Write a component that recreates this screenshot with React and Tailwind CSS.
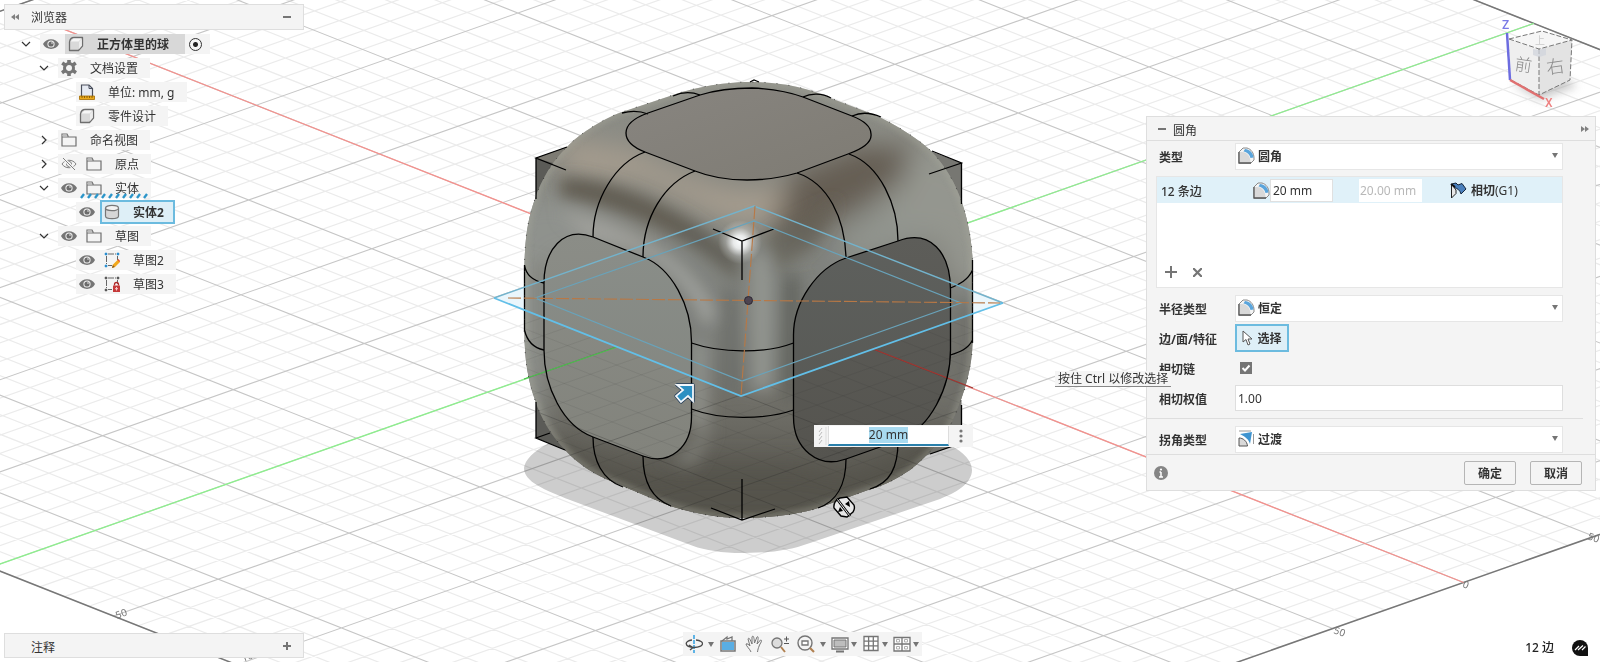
import React from "react";

/* ---------- viewport geometry ---------- */

const ORIGIN = [749, 300];
const AXIS_G = [130.8, -46.1];
const AXIS_R = [123.2, 48.7];
const NEAR = 5.8;
const FAR = 6;

const at = (s, t) => [
  ORIGIN[0] + s * AXIS_G[0] + t * AXIS_R[0],
  ORIGIN[1] + s * AXIS_G[1] + t * AXIS_R[1],
];

const seg = (p, q) => `M${p[0].toFixed(1)},${p[1].toFixed(1)}L${q[0].toFixed(1)},${q[1].toFixed(1)}`;

function buildGrid() {
  let minor = "";
  let major = "";
  for (let i = -30; i <= 30; i++) {
    const v = i / 5;
    const isMajor = i % 5 === 0;
    let d = "";
    if (v >= -NEAR) d += seg(at(v, -FAR), at(v, NEAR));
    if (v <= NEAR) d += seg(at(-NEAR, v), at(FAR, v));
    if (isMajor) major += d;
    else minor += d;
  }
  const corners = [at(-NEAR, -FAR), at(FAR, -FAR), at(FAR, NEAR), at(-NEAR, NEAR)];
  const border = corners.map((c, i) => seg(c, corners[(i + 1) % 4])).join("");
  return { minor, major, border };
}

const GRID = buildGrid();

const BODY =
  "M524.5,332 L524.5,265 C525,235 529,215 535,199 C541,180 553,160 567,147 C577,136 600,120 622,112 L673,95 C690,89 720,82 750,82 C780,82 808,88 825,96 L867,112 C885,118 915,136 930,150 C945,165 956,184 962,203 C968,220 972.5,245 972.5,262 L972.5,343 C972,366 966,390 953,420 C945,436 930,454 910,470 C895,480 880,487 868,490 L818,508 C800,514 770,518 742,518 C715,518 690,512 670,506 L613,482 C596,475 580,466 565,450 C550,434 541,418 535,400 C528,380 524.5,360 524.5,332 Z";
const TOP_FACE =
  "M645,152 C632,147 626,140 626,133 C626,125 634,118 648,113 L700,95 C716,90 733,88 752,88 C772,89 789,92 803,97 L852,116 C865,121 871,127 871,134 C872,142 862,149 848,154 L797,173 C780,178 765,180 747,180 C728,180 710,177 695,171 Z";
const LEFT_FACE =
  "M593,237 C563,226 544,250 544,283 L544,350 C544,387 563,426 593,437 L643,456 C670,466 691.5,447 691.5,417 L691.5,342 C691.5,306 672,268 643,257 Z";
const RIGHT_FACE =
  "M898,241 C930,229 950.5,252 950.5,290 L950.5,350 C950.5,388 930,428 900,440 L846,459 C818,469 793.5,449 793.5,417 L793.5,335 C793.5,302 817,268 846,258 Z";
const EDGES =
  "M645,152 C615,163 593,200 593,237 M695,171 C664,183 643,218 643,257 M797,173 C828,183 845,218 846,258 M849,154 C880,165 898,205 898,241 " +
  "M648,114 C640,111 630,111 622,113 M700,95 C692,92 682,92 673,96 M803,97 C811,93 822,93 831,98 M852,116 C861,112 872,113 881,117 " +
  "M524.5,265 C526,275 534,281 544,283 M524.5,330 C527,341 534,348 544,350 M972.5,270 C968,280 960,284 950.5,288 M972.5,340 C968,349 960,352 950.5,355 M972.5,260 V343 M524.5,265 V332 " +
  "M691.5,343 C720,353 765,354 793.5,343 M691.5,409 C720,420 765,420 793.5,410 " +
  "M593,437 C593,460 602,480 623,487 M643,456 C643,485 655,500 671,506 M846,459 C846,485 836,502 818,508 M898,441 C898,468 890,483 870,489";
const CUBE_EDGES =
  "M713,229 L742,241 L774,229 M742,241 V280 M711,508 L742,520 L775,509 M742,520 V479 " +
  "M566,170 L536,158 L567,147 M536,158 V199 M929,174 L961.5,163 L932,151 M961.5,163 V204 " +
  "M550,433 L536,438 L565,450 M536,438 V402 M930,454 L961.5,443 V405 M750,82 L754,80 L759,82";

function Grid() {
  return (
    <>
      <path d={GRID.minor} stroke="#ebebeb" strokeWidth="1.2" />
      <path d={GRID.major} stroke="#c6c6c6" strokeWidth="1.1" />
    </>
  );
}

function Scene() {
  const [g0, r0, r1, g1] = [at(-NEAR, 0), at(0, -FAR), at(0, NEAR), at(FAR, 0)];
  return (
    <svg
      className="absolute inset-0 h-full w-full"
      viewBox="0 0 1600 662"
      preserveAspectRatio="xMidYMid slice"
      fill="none"
      aria-hidden="true"
    >
      <defs>
        <clipPath id="body"><path d={BODY} /></clipPath>
        <clipPath id="below"><path d="M0,298 H494 L741,396 L1003,303 H1600 V662 H0 Z" /></clipPath>
        <filter id="rim" x="-20%" y="-20%" width="140%" height="140%"><feGaussianBlur stdDeviation="3" /></filter>
        <filter id="b8" x="-60%" y="-60%" width="220%" height="220%"><feGaussianBlur stdDeviation="8" /></filter>
        <filter id="b14" x="-50%" y="-50%" width="200%" height="200%"><feGaussianBlur stdDeviation="14" /></filter>
        <radialGradient id="spark"><stop offset="0" stopColor="#fff" /><stop offset="0.3" stopColor="#fff" stopOpacity="0.85" /><stop offset="0.65" stopColor="#fff" stopOpacity="0.25" /><stop offset="1" stopColor="#fff" stopOpacity="0" /></radialGradient>
        <linearGradient id="topFace" x1="0" y1="0" x2="1" y2="1"><stop stopColor="#888580" /><stop offset="1" stopColor="#7e7b73" /></linearGradient>
        <linearGradient id="leftFace" x1="0" y1="0" x2="0" y2="1"><stop stopColor="#8b8d87" /><stop offset="1" stopColor="#82837c" /></linearGradient>
        <linearGradient id="rightFace" x1="0" y1="0" x2="0" y2="1"><stop stopColor="#5d5d59" /><stop offset="1" stopColor="#55544f" /></linearGradient>
        <linearGradient id="bodyBase" x1="0" y1="82" x2="0" y2="518" gradientUnits="userSpaceOnUse">
          <stop stopColor="#8d8e87" /><stop offset="0.55" stopColor="#7d7d77" /><stop offset="0.78" stopColor="#6b6a63" /><stop offset="1" stopColor="#4f4d46" />
        </linearGradient>
      </defs>

      <path d="M524,468 C526,452 560,432 600,430 L900,430 C940,436 972,452 972,470 C972,484 955,493 940,499 L810,543 C785,552 765,553 735,553 C715,552 700,549 688,544 L570,500 C545,490 524,482 524,468 Z" fill="#cdcdcd" />
      <g style={{ mixBlendMode: "multiply" }}><Grid /></g>
      <path d={GRID.border} stroke="#777" strokeWidth="1.5" />
      <path d={seg(r0, r1)} stroke="#f4918d" strokeWidth="1.3" />
      <path d={seg(g0, g1)} stroke="#8eee8e" strokeWidth="1.3" />

      <g fill="#777" fontSize="10" fontFamily="Noto Sans, sans-serif">
        <text transform="translate(117 619) rotate(-20)">50</text>
        <text transform="translate(243 662) rotate(-20)">100</text>
        <text transform="translate(1333 633) rotate(20)">50</text>
        <text transform="translate(1462 587) rotate(20)">0</text>
        <text transform="translate(1587 539) rotate(20)">50</text>
      </g>

      {/* cube corners that stick out of the rounded body */}
      <path d="M536,158 L570,146 L570,170 L536,202 Z M536,400 V438 L570,452 L570,400 Z" fill="#5b5b57" />
      <path d="M536,158 L570,146 L570,168 Z" fill="#7d7b73" />
      <path d="M961.5,163 L925,149 V200 H961.5 Z" fill="#777772" />
      <path d="M961.5,400 V443 L925,456 V400 Z" fill="#73736e" />

      {/* body */}
      <path d={BODY} fill="url(#bodyBase)" />
      <g clipPath="url(#body)">
        <g filter="url(#b14)">
          <path d="M505,200 L560,190 L640,235 L600,260 L555,260 L540,430 H505 Z" fill="#8f928d" />
          <path d="M885,120 L1000,180 V300 H960 L940,240 L870,245 L880,200 Z" fill="#94968f" />
          <path d="M560,140 L630,150 L690,178 L742,192 L790,185 L780,225 L730,222 L640,180 L565,172 Z" fill="#a99f90" />
          <path d="M790,176 L855,148 L915,140 L900,185 L850,210 L795,250 L768,240 Z" fill="#655d52" />
          <path d="M835,235 L900,205 L940,235 L850,262 Z" fill="#92958f" />
          <path d="M535,435 L640,475 L690,465 H800 L850,475 L970,410 V530 H590 Z" fill="#55534c" />
          <path d="M955,290 H985 V440 H950 Z" fill="#6d6d67" />
        </g>
        <g filter="url(#b8)">
          <path d="M560,178 C610,176 690,212 736,256 L740,282 C690,236 630,208 560,196 Z" fill="#5f5a50" />
          <path d="M560,212 C630,226 690,256 716,312 L706,330 C690,280 655,250 590,238 Z" fill="#a2a29d" />
          <path d="M768,235 L838,200 L812,245 L772,275 Z" fill="#655f55" opacity="0.7" />
          <path d="M532,262 H540 V345 H532 Z" fill="#6f706a" opacity="0.7" />
          <path d="M520,262 H526 V345 H520 Z" fill="#a5a69e" />
          <path d="M690,340 L708,340 L708,425 L690,425 Z" fill="#90918b" />
          <path d="M722,290 H736 V390 H722 Z" fill="#6c6c66" />
          <path d="M752,255 H772 V390 H752 Z" fill="#94958f" />
          <path d="M782,275 H800 V400 H782 Z" fill="#62625c" />
          <path d="M650,463 C670,470 690,455 700,425 L712,430 L695,465 Z" fill="#7d7d76" />
        </g>
        <path d={BODY} stroke="#aaab9f" strokeWidth="5" opacity="0.55" filter="url(#rim)" />
        <circle cx="740" cy="242" r="22" fill="url(#spark)" />
      </g>
      <path d={TOP_FACE} fill="url(#topFace)" />
      <path d={LEFT_FACE} fill="url(#leftFace)" />
      <path d={RIGHT_FACE} fill="url(#rightFace)" />

      {/* ground grid seen through the lower half */}
      <g clipPath="url(#body)">
        <g clipPath="url(#below)">
          <path d={GRID.major} stroke="#222" strokeWidth="1" opacity="0.25" />
          <path d={GRID.minor} stroke="#222" strokeWidth="1" opacity="0.07" />
        </g>
      </g>
      <path d="M524,379 L617,347" stroke="#4bc04b" strokeWidth="1.3" />
      <path d="M873,349 L973,388" stroke="#a5342f" strokeWidth="1.3" />

      <path d="M494,298 L754,206 L1003,303 L741,396 Z" fill="#7cc8ec" opacity="0.03" />
      <path d="M494,298 L524,287 V310 Z M1003,303 L973,291 V314 Z" fill="#eaf6fc" />

      <g stroke="#000" strokeWidth="1.3">
        <path d={TOP_FACE} />
        <path d={LEFT_FACE} />
        <path d={RIGHT_FACE} />
        <path d={EDGES} />
        <path d={CUBE_EDGES} />
      </g>
      <path d={BODY} stroke="#222" strokeWidth="1" strokeDasharray="1 11" opacity="0.7" />

      <path d="M494,298 L754,206 L1003,303" stroke="#73b3cc" strokeWidth="1.4" />
      <path d="M494,298 L741,396 L1003,303" stroke="#62bfe8" strokeWidth="1.8" />
      <path d="M535,298 L754,221 L961,303 L742,381 Z" stroke="#69a3ba" strokeWidth="1.2" />
      <g stroke="#b87845" strokeWidth="1.1" strokeDasharray="13 3">
        <path d="M508,298 L1000,303" />
        <path d="M755,206 L741,396" />
      </g>
      <circle cx="748.500" cy="300.500" r="4" fill="#4d4450" stroke="#2e2833" strokeWidth="1" />

      {/* manipulator arrow */}
      <path d="M677,385 L693,385 L693,401 L688,396 L681,402 L676,396 L683,390 Z" fill="#2b8fc2" stroke="#1f3b57" strokeWidth="3.4" strokeLinejoin="round" />
      <path d="M677,385 L693,385 L693,401 L688,396 L681,402 L676,396 L683,390 Z" fill="#2b8fc2" stroke="#f2f6fa" strokeWidth="1.8" />

      {/* rotate handle */}
      <g transform="translate(844 507)">
        <path d="M-4,-9 L3,-10 L10,-2 A8,8 0 0 1 9,5 L3,10 L-3,9 L-10,1 A9,9 0 0 1 -4,-9 Z" fill="#e8e8e8" stroke="#000" strokeWidth="1.4" />
        <path d="M-7,-8 L6,9" stroke="#000" strokeWidth="2.6" />
        <path d="M-6.500,-7.500 L5.500,8.500" stroke="#e8e8e8" strokeWidth="1" />
        <path d="M1,-3 L5,-6 L6,0 Z M-1,4 L-6,5 L-4,0 Z" fill="#000" />
      </g>
    </svg>
  );
}

/* ---------- icons ---------- */

const Svg = ({ w = 16, h = 16, children }) => (
  <svg width={w} height={h} viewBox={`0 0 ${w} ${h}`} fill="none" aria-hidden="true" className="shrink-0">
    {children}
  </svg>
);
const Chevron = ({ open }) => (
  <Svg w={10} h={10}><path d={open ? "M1,3 L5,7 L9,3" : "M3,1 L7,5 L3,9"} stroke="#333" strokeWidth="1.2" /></Svg>
);
const Eye = () => (
  <Svg w={16} h={12}>
    <path d="M0,6 C3,-0.500 13,-0.500 16,6 C13,12.500 3,12.500 0,6 Z" fill="#757575" />
    <circle cx="8" cy="6" r="3.600" fill="#f4f4f4" /><circle cx="8" cy="6" r="2.600" fill="#6b6b6b" /><circle cx="9" cy="5" r="0.800" fill="#eee" />
  </Svg>
);
const EyeOff = () => (
  <Svg w={16} h={14}>
    <path d="M1,7 C4,2 12,2 15,7 C12,12 4,12 1,7 Z" stroke="#808080" /><circle cx="8" cy="7" r="2.500" stroke="#808080" />
    <path d="M2,1 L14,13" stroke="#f4f4f4" strokeWidth="3" /><path d="M2,1 L14,13" stroke="#808080" />
  </Svg>
);
const Folder = () => (
  <Svg w={16} h={14}><path d="M1,4 H15 V13 H1 Z M1,4 V1 H6 L7,3 V4" stroke="#6e6e6e" strokeWidth="1.2" /><path d="M1.500,1.500 H5.500 L6.500,3.500 H1.500Z" fill="#bdbdbd" /></Svg>
);
const Part = () => (
  <Svg w={16} h={16}>
    <path d="M1.500,6 C2,3 3,1.500 6,1.500 H14.500 V10 L10.500,14.500 H1.500 Z" fill="#d9d9d9" stroke="#6e6e6e" strokeWidth="1.3" strokeLinejoin="round" />
    <path d="M2.500,5.500 L5.500,2.500 H13.500 L10.500,5.500 Z" fill="#f6f6f6" />
    <path d="M11,6 L13.800,3 V9.800 L11,13 Z" fill="#ececec" />
  </Svg>
);
const Gear = () => (
  <Svg>
    <path d="M6.200,0 h3.600 v3 h-3.600z M6.200,13 h3.600 v3 h-3.600z M0.200,4.500 l2,-3 3,2 -2,3z M11,12 l2,-3 3,2.200 -2,3z M15.800,4.500 l-2,-3 -3,2 2,3z M5,12 l-2,-3 -3,2.200 2,3z" fill="#757575" />
    <circle cx="8" cy="8" r="4.500" stroke="#757575" strokeWidth="3" />
  </Svg>
);
const Units = () => (
  <Svg><path d="M2.500,12 V1 H10 L13.500,4.500 V12" fill="#e6eaf2" stroke="#4a4f5c" strokeWidth="1.200" /><path d="M10,1 V4.500 H13.500" stroke="#4a4f5c" /><path d="M0.500,12 H15.500 V15.500 H0.500 Z" fill="#e9a91c" stroke="#a56c00" strokeWidth="0.800" /><path d="M3,12v2M5.500,12v2M8,12v2M10.500,12v2M13,12v2" stroke="#7a5000" strokeWidth="0.800" /></Svg>
);
const Cylinder = () => (
  <Svg><path d="M1.500,4 V12 C1.500,15.500 14.500,15.500 14.500,12 V4" fill="#d6d6d6" stroke="#777" strokeWidth="1.200" /><ellipse cx="8" cy="4" rx="6.500" ry="2.700" fill="#f2f2f2" stroke="#777" strokeWidth="1.200" /></Svg>
);
const Sketch = ({ kind }) => (
  <Svg>
    <path d="M2.500,4 V12 M4,2 H12 M13.500,4 V8 M4,13.500 H8" stroke="#666" strokeDasharray="6 1" />
    <path d="M1,1h2v2h-2z M13,1h2v2h-2z M1,13h2v2h-2z" fill={kind === "lock" ? "#5a5a5a" : "#2b8fd0"} stroke={kind === "lock" ? "#5a5a5a" : "#2b8fd0"} strokeWidth="0.500" />
    {kind === "lock" ? (
      <><path d="M10.500,9.500 V8.500 a2,2 0 0 1 4,0 V9.500" stroke="#b02a2a" strokeWidth="1.300" /><rect x="9" y="9.500" width="7" height="6.500" fill="#c63a3a" /><path d="M12.500,11v3.500M11,12.700h3" stroke="#f6c8c8" /></>
    ) : (
      <><path d="M8,16 L9,12.500 L14,7.500 L16,10 L11,15 Z" fill="#f2a81d" /><path d="M13.500,8 L14.500,7 L16,9 L15.500,10z" fill="#e0452e" /><path d="M8,16 L8.800,13 L10.800,15z" fill="#8a5a20" /></>
    )}
  </Svg>
);
const Fillet = () => (
  <Svg w={17} h={17}>
    <path d="M1,5 L5,1 H9 C13,2 16,6 16,11 V13 L13,16 H1 Z" fill="#f4f4f4" stroke="#8a8a8a" />
    <path d="M1,16 V5 H4 C9,5 12.500,9 12.500,16 Z" fill="#d9d9d9" />
    <path d="M7,2 C11,2 15.500,6 15.500,10.500 L12.500,11 C12,8 9,5 5.500,4.500 Z" fill="#5aa5dc" />
    <path d="M1,5 V16 H13" stroke="#555" strokeWidth="1.300" />
  </Svg>
);
const Corner = () => (
  <Svg w={17} h={17}>
    <path d="M1,16 V8 C5,8 9,11 9.500,16 Z" fill="#d9d9d9" stroke="#555" />
    <path d="M2,4 L14,2 L12,14 C11,10 8,7 2,4 Z" fill="#3f94d0" /><path d="M1,1 H13 M15.500,4 V14" stroke="#999" />
  </Svg>
);
const Tangent = () => (
  <Svg w={17} h={17}>
    <path d="M1.500,2 L6,1 L8,3 L12,1.500 L16,7 L11,12 C10,8 7,6 4,5.500 Z" fill="#4a80bd" stroke="#16263c" />
    <path d="M1.500,2 V16 L6,11.500 V8 Z" fill="#e8e8e8" stroke="#222" /><path d="M1,2 L5,5" stroke="#111" strokeWidth="2" />
  </Svg>
);
const Cursor = () => (
  <Svg w={11} h={16}><path d="M1,1 V12 L4,9.500 L6,15 L8,14 L6,9 H10 Z" fill="#fff" stroke="#555" /></Svg>
);
const Caret = () => <Svg w={6} h={5}><path d="M0,0 H6 L3,5 Z" fill="#757575" /></Svg>;
const Minus = () => <Svg w={8} h={8}><path d="M0,4 H8" stroke="#757575" strokeWidth="2" /></Svg>;
const Plus = ({ size = 8, stroke = 2 }) => (
  <Svg w={size} h={size}><path d={`M0,${size / 2} H${size} M${size / 2},0 V${size}`} stroke="#757575" strokeWidth={stroke} /></Svg>
);
const DoubleArrow = ({ flip }) => (
  <Svg w={8} h={6}><path d={flip ? "M4,0 V6 L0,3 Z M8,0 V6 L4,3 Z" : "M0,0 V6 L4,3 Z M4,0 V6 L8,3 Z"} fill="#808080" /></Svg>
);

/* ---------- browser tree ---------- */

const ICONS = {
  part: <Part />,
  gear: <Gear />,
  units: <Units />,
  folder: <Folder />,
  cylinder: <Cylinder />,
  sketch: <Sketch />,
  locked: <Sketch kind="lock" />,
};

const TREE = [
  { label: "正方体里的球", depth: 0, open: true, eye: true, icon: "part", root: true },
  { label: "文档设置", depth: 1, open: true, icon: "gear" },
  { label: "单位: mm, g", depth: 2, icon: "units" },
  { label: "零件设计", depth: 2, icon: "part" },
  { label: "命名视图", depth: 1, open: false, icon: "folder" },
  { label: "原点", depth: 1, open: false, eye: "off", icon: "folder" },
  { label: "实体", depth: 1, open: true, eye: true, icon: "folder", isolated: true },
  { label: "实体2", depth: 2, eye: true, icon: "cylinder", selected: true },
  { label: "草图", depth: 1, open: true, eye: true, icon: "folder" },
  { label: "草图2", depth: 2, eye: true, icon: "sketch" },
  { label: "草图3", depth: 2, eye: true, icon: "locked" },
];

const INDENT = ["pl-[18px]", "pl-9", "pl-[54px]"];

function TreeRow({ item }) {
  const tone = item.root
    ? "bg-[#d8d8d8] pr-4 font-bold"
    : item.selected
      ? "h-[22px] bg-[#deeff7] pr-2.5 font-bold outline-2 -outline-offset-1 outline-[#6cbbdf]"
      : "pr-3";
  return (
    <li className={`flex h-6 items-center ${INDENT[item.depth]}`}>
      {item.open === undefined ? (
        <span className="w-[22px]" />
      ) : (
        <button type="button" aria-label={`展开 ${item.label}`} className="mr-1.5 flex w-4 justify-center">
          <Chevron open={item.open} />
        </button>
      )}
      <div className="flex h-5 items-center bg-[#f4f4f4]">
        {item.eye && (
          <button type="button" aria-label={`显示 ${item.label}`} className="mr-[3px] flex w-[22px] justify-center">
            {item.eye === "off" ? <EyeOff /> : <Eye />}
          </button>
        )}
        <span className={`relative flex h-5 items-center whitespace-nowrap ${tone}`}>
          <span className="mr-2.5 flex w-[22px] justify-center">{ICONS[item.icon]}</span>
          <span className="pt-0.5">{item.label}</span>
          {item.isolated && (
            <svg className="absolute -bottom-px -left-1" width="74" height="6" aria-hidden="true">
              {Array.from({ length: 10 }, (_, i) => (
                <path key={i} d={`M${i * 7 + 2},5 L${i * 7 + 5},1`} stroke="#2b95c9" strokeWidth="2.4" />
              ))}
            </svg>
          )}
        </span>
        {item.root && (
          <input
            type="radio"
            defaultChecked
            aria-label="激活零部件"
            className="mr-2 ml-1 size-[13px] appearance-none rounded-full border border-[#333] bg-[radial-gradient(circle,#222_0_2px,transparent_3px)] bg-center"
          />
        )}
      </div>
    </li>
  );
}

function Browser() {
  return (
    <aside className="w-[300px]">
      <header className="flex h-[26px] items-center border border-[#dedede] bg-[#f4f4f4] pr-3 pl-1.5">
        <button type="button" aria-label="收起" className="mr-3"><DoubleArrow flip /></button>
        <h2 className="grow pt-0.5">浏览器</h2>
        <button type="button" aria-label="最小化"><Minus /></button>
      </header>
      <ul className="-ml-1 pt-0.5">
        {TREE.map((item) => <TreeRow key={item.label} item={item} />)}
      </ul>
    </aside>
  );
}

/* ---------- view cube ---------- */

function ViewCube() {
  return (
    <svg width="110" height="112" viewBox="1490 4 110 112" fill="none" aria-label="视图立方体">
      <defs>
        <filter id="soft" x="-30%" y="-50%" width="160%" height="200%"><feGaussianBlur stdDeviation="4" /></filter>
      </defs>
      <path d="M1512,84 L1540,100 L1578,86 L1560,76 Z" fill="#aaa" opacity="0.6" filter="url(#soft)" />
      <path d="M1509,39 L1539,49 V95 L1511,80 Z" fill="#efefef" />
      <path d="M1539,49 L1572,40 L1570,80 L1539,95 Z" fill="#e3e3e3" />
      <path d="M1509,39 L1542,31 L1572,40 L1539,49 Z" fill="#f6f6f6" />
      <path d="M1509,39 L1542,31 L1572,40 L1539,49 Z M1539,49 V95 M1511,80 L1539,95 L1570,80 L1572,40" stroke="#777" strokeDasharray="5 2" />
      <path d="M1533,49 L1539,50 L1546,48 V55 L1539,57 L1533,55 Z" fill="#cfd3dc" opacity="0.7" />
      <g fill="#8a8a8a" fontFamily="Noto Sans CJK SC, sans-serif" fontWeight="300">
        <text x="1515" y="71" fontSize="17" transform="rotate(8 1523 65)">前</text>
        <text x="1546" y="73" fontSize="18" transform="rotate(-8 1555 65)">右</text>
        <text x="1535" y="44" fontSize="10" fill="#b5b5b5">上</text>
      </g>
      <path d="M1507,33 L1510,80" stroke="#6c6ce0" strokeWidth="2.500" />
      <path d="M1510,80 L1544,99" stroke="#e07070" strokeWidth="2.500" />
      <text x="1502" y="29" fontSize="12" fill="#7a7ae6" fontFamily="Roboto, sans-serif" fontWeight="500">Z</text>
      <text x="1545" y="107" fontSize="12" fill="#ee8080" fontFamily="Roboto, sans-serif" fontWeight="500">X</text>
    </svg>
  );
}

/* ---------- fillet dialog ---------- */

function FormRow({ id, label, children }) {
  return (
    <div className="flex h-[30px] items-center">
      <label htmlFor={id} className="w-[76px] shrink-0 pt-1 font-bold">{label}</label>
      <div className="flex grow items-center">{children}</div>
    </div>
  );
}

function IconSelect({ id, icon, value }) {
  return (
    <div className="relative h-[27px] grow">
      <select id={id} defaultValue={value} className="h-full w-full appearance-none border border-[#e6e6e6] bg-white pt-0.5 pl-[22px] font-bold">
        <option>{value}</option>
      </select>
      <span className="pointer-events-none absolute top-1 left-[3px]">{icon}</span>
      <span className="pointer-events-none absolute top-[10px] right-[5px]"><Caret /></span>
    </div>
  );
}

function FilletDialog() {
  return (
    <section className="mr-1 w-[450px] border border-[#dedede] bg-[#f4f4f4]">
      <header className="flex h-6 items-center border-b border-[#dedede] pr-1.5 pl-[11px]">
        <button type="button" aria-label="折叠"><Minus /></button>
        <h2 className="ml-[7px] grow pt-1">圆角</h2>
        <button type="button" aria-label="展开面板"><DoubleArrow /></button>
      </header>

      <div className="pr-8 pl-3">
        <FormRow id="type" label="类型"><IconSelect id="type" icon={<Fillet />} value="圆角" /></FormRow>

        <div className="mt-[5px] mb-[5px] -ml-[3px] flex h-[112px] flex-col justify-between border border-[#e6e6e6] bg-white">
          <div className="flex h-[26px] items-center bg-[#e0f1f9] pl-1">
            <span className="w-[92px] pt-1 font-medium">12 条边</span>
            <Fillet />
            <input aria-label="半径" defaultValue="20 mm" className="h-[23px] w-[63px] border border-[#e0e0e0] bg-white px-0.5" />
            <input aria-label="弦长" defaultValue="20.00 mm" disabled className="ml-[26px] h-[23px] w-[63px] bg-white px-px text-[#b8b8b8]" />
            <button type="button" className="ml-7 flex items-center gap-1">
              <Tangent />
              <span className="pt-0.5"><b>相切</b>(G1)</span>
            </button>
          </div>
          <div className="flex h-[30px] items-center gap-4 pl-2">
            <button type="button" aria-label="添加"><Plus size={12} /></button>
            <button type="button" aria-label="删除">
              <Svg w={9} h={9}><path d="M0,0 L9,9 M9,0 L0,9" stroke="#757575" strokeWidth="2.200" /></Svg>
            </button>
          </div>
        </div>

        <FormRow id="radius-type" label="半径类型"><IconSelect id="radius-type" icon={<Fillet />} value="恒定" /></FormRow>
        <FormRow id="pick" label="边/面/特征">
          <button id="pick" type="button" className="flex h-7 w-[54px] items-center justify-center gap-1 border-2 border-[#6cbbdf] bg-[#deeff7] font-bold">
            <Cursor /><span className="pt-0.5">选择</span>
          </button>
        </FormRow>
        <FormRow id="chain" label="相切链">
          <span className="relative ml-[5px] flex">
            <input id="chain" type="checkbox" defaultChecked className="size-3 appearance-none bg-[#757575]" />
            <svg className="pointer-events-none absolute inset-0" width="12" height="12" fill="none" aria-hidden="true"><path d="M2.500,6 L5,8.500 L9.500,3.500" stroke="#fff" strokeWidth="2" /></svg>
          </span>
        </FormRow>
        <FormRow id="weight" label="相切权值">
          <input id="weight" defaultValue="1.00" className="h-[26px] w-full border border-[#dedede] bg-white px-0.5" />
        </FormRow>
      </div>
      <hr className="my-[5px] mr-3 border-[#dedede]" />
      <div className="pr-8 pl-3">
        <FormRow id="corner" label="拐角类型"><IconSelect id="corner" icon={<Corner />} value="过渡" /></FormRow>
      </div>

      <footer className="flex h-9 items-center border-t border-[#dedede] pr-[13px] pl-[7px]">
        <button type="button" aria-label="信息" className="mr-auto">
          <Svg w={14} h={14}><circle cx="7" cy="7" r="7" fill="#858585" /><path d="M7,6 V11 M5.500,6 H7 M5,11 H9" stroke="#fff" strokeWidth="1.500" /><circle cx="7" cy="3.500" r="1.100" fill="#fff" /></Svg>
        </button>
        <button type="button" className="h-6 w-[52px] rounded-xs border border-[#b5b5b5] pt-0.5 font-bold">确定</button>
        <button type="button" className="ml-3.5 h-6 w-[52px] rounded-xs border border-[#b5b5b5] pt-0.5 font-bold">取消</button>
      </footer>
    </section>
  );
}

/* ---------- bottom bar ---------- */

const G = "#757575";
const TOOLS = [
  { label: "动态观察", size: "w-[31px] pr-0.5", menu: true, icon: <Svg w={18} h={18}><path d="M9,0 V18" stroke="#5fb4e6" strokeWidth="2" strokeDasharray="4 1" /><path d="M11,5 C20,6 20,12 9,12.500 C-1,12 -1,6 7,5 M4,10 L8,12.500 L5,15" stroke="#4a4a4a" strokeWidth="1.300" /></Svg> },
  { label: "观察", size: "w-[26px] pl-[3px]", icon: <Svg w={18} h={18}><path d="M2,6 H16 V16 H2 Z" fill="#fff" stroke={G} strokeWidth="1.500" /><path d="M3,7 H15 V15 H3 Z" fill="#5aaee4" /><path d="M3,6 L8,2 V4 L13,2 V6" stroke={G} strokeWidth="1.300" /></Svg> },
  { label: "平移", size: "w-[26px] pl-[3px]", icon: <Svg w={18} h={18}><path d="M6,17 C5,14 1,11 1,9 C2,8 4,10 5,11 L3,4 C4,2 5,4 7,9 L7,2 C8,0 9,1 9.500,8 L12,2 C13,1 14,2 12,9 L15.500,5 C17,5 17,6 14.500,10 C13,14 13,14 12.500,17" stroke={G} /></Svg> },
  { label: "缩放", size: "w-[26px] pl-[3px]", icon: <Svg w={18} h={18}><circle cx="6" cy="8" r="5" fill="#dcdcdc" stroke={G} strokeWidth="1.300" /><path d="M10,12 L14,17" stroke="#b08050" strokeWidth="2" /><path d="M13,4 H18 M15.500,1.500 V6.500 M13,8.500 H18" stroke="#555" /></Svg> },
  { label: "窗口缩放", size: "w-[34px] pr-0.5 pl-[3px]", menu: true, icon: <Svg w={18} h={18}><circle cx="8" cy="8" r="7" stroke={G} strokeWidth="1.400" /><path d="M5,6 H11 V10 H5 Z" fill="#fff" stroke={G} strokeWidth="1.300" /><path d="M13,13 L17,17" stroke="#b08050" strokeWidth="2.200" /></Svg> },
  { label: "显示设置", size: "w-[31px] pr-0.5 pl-[3px]", menu: true, icon: <Svg w={18} h={18}><path d="M1,3 H17 V14 H1 Z" fill="#fff" stroke={G} strokeWidth="1.300" /><path d="M3,5 H15 V12 H3 Z" fill="#bdbdbd" stroke={G} /><path d="M5,16.500 H13" stroke={G} strokeWidth="2" /></Svg> },
  { label: "栅格", size: "w-[31px] pr-0.5 pl-[3px]", menu: true, icon: <Svg w={18} h={18}><path d="M2,1.500 H16 V15.500 H2 Z M6.600,1.500 V15.500 M11.300,1.500 V15.500 M2,6.200 H16 M2,10.800 H16" stroke={G} strokeWidth="1.300" fill="#fff" /></Svg> },
  { label: "视口", size: "w-[31px] pr-0.5 pl-[3px]", menu: true, icon: <Svg w={18} h={18}><path d="M1,2.500 H17 V16 H1 Z M9,2.500 V16 M1,9 H17" stroke={G} strokeWidth="1.300" fill="#fff" /><path d="M3.500,4.500h3v2.500h-3z M11.500,4.500h3v2.500h-3z M3.500,11.500h3v2.500h-3z M11.500,11.500h3v2.500h-3z" stroke="#b0b0b0" /></Svg> },
];

function NavBar() {
  return (
    <nav className="flex h-6 items-center bg-[#f4f4f4] pr-px pl-0.5">
      {TOOLS.map((t) => (
        <button key={t.label} type="button" aria-label={t.label} className={`flex items-center justify-between ${t.size}`}>
          {t.icon}
          {t.menu && <Caret />}
        </button>
      ))}
    </nav>
  );
}

/* ---------- overlays on the canvas ---------- */

function ValueInput() {
  return (
    <div className="absolute top-[calc(50%+94px)] left-[calc(50%+14px)] flex h-[22px] w-[159px] items-center bg-[#f4f4f4]">
      <svg width="14" height="18" className="shrink-0" aria-hidden="true">
        {[1, 5, 9, 13].map((y) => <path key={y} d={`M5,${y + 4} L8,${y}`} stroke="#bbb" />)}
        <path d="M12,0 V18" stroke="#ddd" />
      </svg>
      <div className="flex h-5 w-[121px] items-center justify-center border-x border-b-2 border-x-[#ddd] border-b-[#2a80ab] bg-white">
        <input aria-label="圆角半径" defaultValue="20 mm" className="field-sizing-content h-4 bg-[#a8daf0] text-center" />
      </div>
      <button type="button" aria-label="更多" className="flex grow justify-center">
        <Svg w={4} h={14}><circle cx="2" cy="2" r="1.600" fill="#777" /><circle cx="2" cy="7" r="1.600" fill="#777" /><circle cx="2" cy="12" r="1.600" fill="#777" /></Svg>
      </button>
    </div>
  );
}

export default function App() {
  return (
    <main className="relative flex min-h-screen flex-col justify-between overflow-hidden bg-white font-['Noto_Sans','Noto_Sans_CJK_SC',sans-serif] text-[12px] leading-4 text-[#333]">
      <Scene />
      <ValueInput />

      <div className="relative flex items-start justify-between pl-1">
        <div className="pt-1"><Browser /></div>
        <div className="flex flex-col items-end pt-1">
          <ViewCube />
          <FilletDialog />
        </div>
      </div>

      <div role="tooltip" className="absolute top-[calc(50%+40px)] left-[calc(50%+255px)] flex h-4 items-center border-b border-[#888] bg-[#f5f5f5] px-[3px] whitespace-nowrap">
        按住 Ctrl 以修改选择
      </div>

      <div className="relative grid grid-cols-[1fr_auto_1fr] items-end pb-1 pl-1">
        <section className="flex h-[25px] w-[300px] items-center border border-[#dedede] bg-[#f4f4f4] pr-3 pl-[26px]">
          <h2 className="grow pt-1">注释</h2>
          <button type="button" aria-label="添加注释"><Plus /></button>
        </section>
        <div className="pb-0.5"><NavBar /></div>
        <div className="flex items-center justify-end gap-[18px] pr-3 pb-0.5">
          <span className="font-medium text-[#222]">12 边</span>
          <button type="button" aria-label="助手">
            <Svg w={16} h={16}><path d="M8,0 A8,8 0 0 1 16,8 V16 H8 A8,8 0 0 1 8,0 Z" fill="#111" /><path d="M3,10 L7,6 M6,10 L11,5.500 M10,10 L13.500,6.500" stroke="#fff" strokeWidth="1.200" /></Svg>
          </button>
        </div>
      </div>
    </main>
  );
}
